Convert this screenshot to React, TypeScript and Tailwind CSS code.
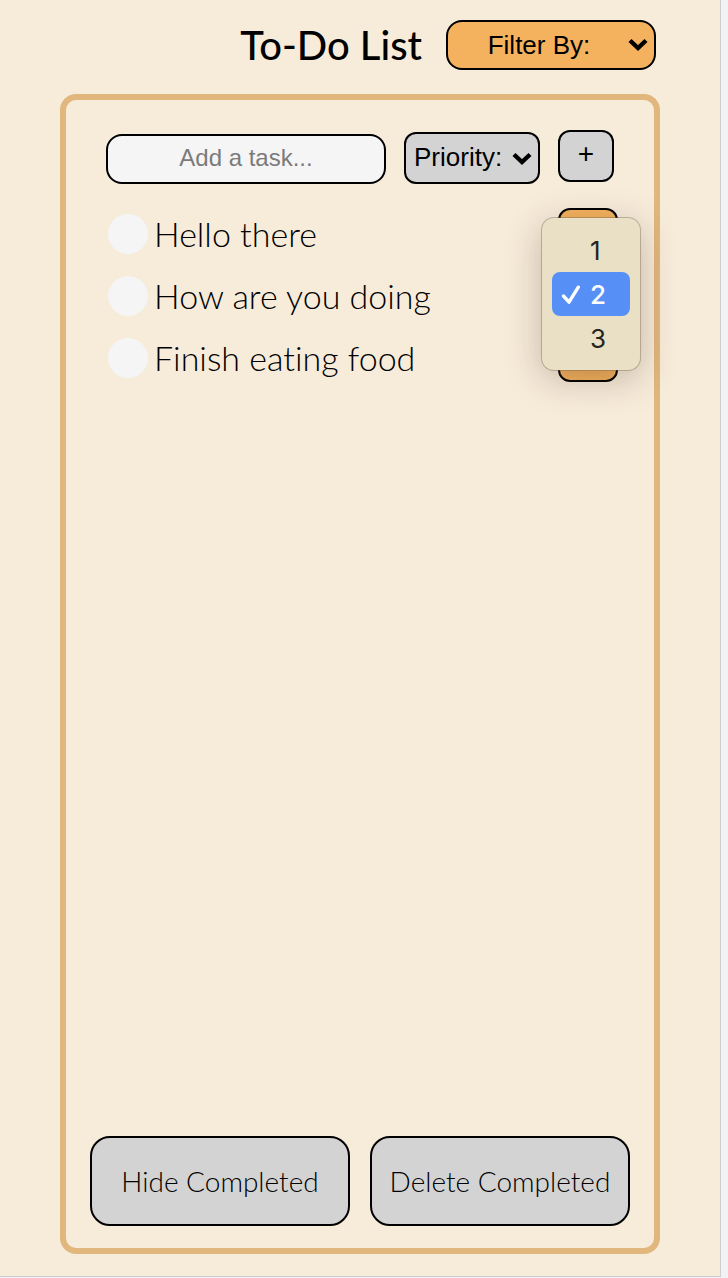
import { useState } from "react";

const tasks = [
  { id: 1, title: "Hello there", priority: "1" },
  { id: 2, title: "How are you doing", priority: "2" },
  { id: 3, title: "Finish eating food", priority: "3" },
];

function Chevron({ className }: { className: string }) {
  return (
    <svg
      className={`pointer-events-none absolute h-[14px] w-5 ${className}`}
      viewBox="0 0 20 14"
      fill="none"
      stroke="#000"
      strokeWidth="4.4"
      aria-hidden="true"
    >
      <path d="M2 2.5 L10 10 L18 2.5" />
    </svg>
  );
}

function PriorityMenu({ value, onPick }: { value: string; onPick: (v: string) => void }) {
  return (
    <div
      role="listbox"
      aria-label="Priority options"
      className="absolute -top-[52px] -left-4 z-10 w-[98px] rounded-xl bg-[#eae0c6] p-[10px] font-['Inter',sans-serif] text-[26px] leading-[44px] text-[#25241f] shadow-[0_0_0_1px_rgba(120,100,80,0.4),0_8px_36px_rgba(60,40,20,0.28)]"
    >
      {["1", "2", "3"].map((n) => (
        <button
          key={n}
          type="button"
          role="option"
          aria-selected={n === value}
          onClick={() => onPick(n)}
          className={`flex h-11 w-full items-center rounded-lg pt-0.5 ${
            n === value ? "bg-[#568ff5] font-medium text-white" : ""
          }`}
        >
          <span className="flex w-[38px] pl-[9px]">
            {n === value && (
              <svg
                className="h-5 w-5"
                viewBox="0 0 20 20"
                fill="none"
                stroke="currentColor"
                strokeWidth="3.4"
                strokeLinecap="round"
                strokeLinejoin="round"
                aria-hidden="true"
              >
                <path d="M2.5 11 L8 17.2 L17.3 2.2" />
              </svg>
            )}
          </span>
          {n}
        </button>
      ))}
    </div>
  );
}

export default function App() {
  const [priority, setPriority] = useState("2");

  return (
    <div className="flex min-h-screen bg-[#f2f2f4] pr-[7px] pb-px font-['Lato',sans-serif] text-black [font-variant-ligatures:none]">
      <main className="flex grow flex-col border-r border-b border-[#cdcdd3] bg-[#f7ebda] px-[60px] pt-5 pb-[22px]">
        <header className="flex items-center justify-end gap-6 pr-1">
          <h1 className="text-[40px] leading-[50px] font-medium">To-Do List</h1>
          <div className="relative">
            <select
              aria-label="Filter By"
              className="block h-[50px] w-[210px] appearance-none rounded-2xl border-2 border-black bg-[#f4b25f] pr-6 text-center font-['Liberation_Sans',sans-serif] text-[26px]"
            >
              <option>Filter By:</option>
            </select>
            <Chevron className="top-[18px] right-2" />
          </div>
        </header>

        <section className="mt-6 flex grow flex-col rounded-2xl border-6 border-[#e2b77d] px-6 pt-[30px] pb-[22px]">
          <form
            className="flex h-[54px] items-end gap-[18px] px-4 font-['Liberation_Sans',sans-serif]"
            onSubmit={(e) => e.preventDefault()}
          >
            <input
              type="text"
              aria-label="New task"
              placeholder="Add a task..."
              className="h-[50px] w-[280px] min-w-0 rounded-2xl border-2 border-black bg-[#f5f5f5] pb-0.5 text-center text-2xl placeholder:text-[#7b7b7b]"
            />
            <div className="relative">
              <select
                aria-label="Priority"
                className="block h-[52px] w-[136px] appearance-none rounded-xl border-2 border-black bg-[#d3d3d3] pb-0.5 pl-2 text-[26px]"
              >
                <option>Priority:</option>
              </select>
              <Chevron className="top-5 right-2" />
            </div>
            <button
              type="submit"
              aria-label="Add task"
              className="h-[52px] w-14 self-start rounded-xl border-2 border-black bg-[#d3d3d3] pb-1 text-[28px] leading-8"
            >
              +
            </button>
          </form>

          <ul className="mt-6 flex grow flex-col gap-[10px] pr-3 pl-[18px]">
            {tasks.map((task) => (
              <li key={task.id} className="flex h-[52px] items-center">
                <input
                  id={`task-${task.id}`}
                  type="checkbox"
                  className="size-10 appearance-none rounded-full bg-[#f5f5f5] checked:bg-[#e2b77d]"
                />
                <label htmlFor={`task-${task.id}`} className="grow pl-[6px] text-[34px] leading-[52px] font-light">
                  {task.title}
                </label>
                <div className="relative self-start">
                  <select
                    aria-label={`Priority of ${task.title}`}
                    value={task.id === 2 ? priority : task.priority}
                    onChange={(e) => task.id === 2 && setPriority(e.target.value)}
                    className="block h-[50px] w-[60px] appearance-none rounded-xl border-2 border-black bg-[#f4b25f] pl-2 text-[26px]"
                  >
                    <option>1</option>
                    <option>2</option>
                    <option>3</option>
                  </select>
                  {task.id === 2 && <PriorityMenu value={priority} onPick={setPriority} />}
                </div>
              </li>
            ))}
          </ul>

          <div className="flex gap-5 text-[28px] font-light">
            <button type="button" className="h-[90px] flex-1 rounded-[20px] border-2 border-black bg-[#d3d3d3]">
              Hide Completed
            </button>
            <button type="button" className="h-[90px] flex-1 rounded-[20px] border-2 border-black bg-[#d3d3d3]">
              Delete Completed
            </button>
          </div>
        </section>
      </main>
    </div>
  );
}
